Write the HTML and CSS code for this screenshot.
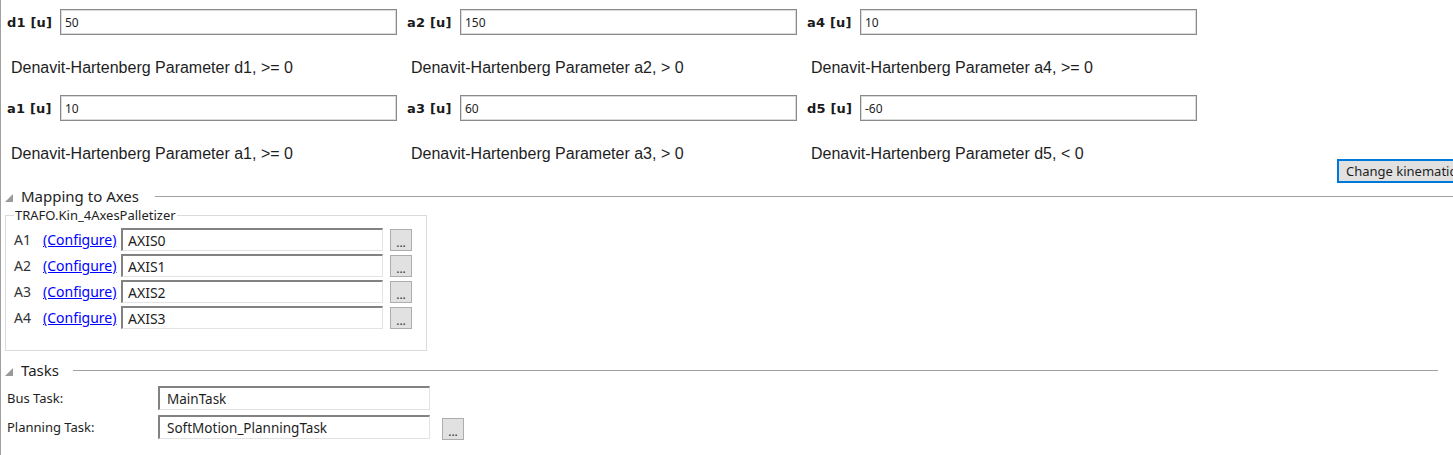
FILE: index.html
```html
<!DOCTYPE html>
<html>
<head>
<meta charset="utf-8">
<link rel="stylesheet" href="styles.css">
</head>
<body>
<div class="params">
  <div class="param">
    <div class="field"><span class="field-label">d1 [u]</span><input class="dh-input" value="50"></div>
    <div class="desc">Denavit-Hartenberg Parameter d1, &gt;= 0</div>
  </div>
  <div class="param">
    <div class="field"><span class="field-label">a2 [u]</span><input class="dh-input" value="150"></div>
    <div class="desc">Denavit-Hartenberg Parameter a2, &gt; 0</div>
  </div>
  <div class="param">
    <div class="field"><span class="field-label">a4 [u]</span><input class="dh-input" value="10"></div>
    <div class="desc">Denavit-Hartenberg Parameter a4, &gt;= 0</div>
  </div>
  <div class="param">
    <div class="field"><span class="field-label">a1 [u]</span><input class="dh-input" value="10"></div>
    <div class="desc">Denavit-Hartenberg Parameter a1, &gt;= 0</div>
  </div>
  <div class="param">
    <div class="field"><span class="field-label">a3 [u]</span><input class="dh-input" value="60"></div>
    <div class="desc">Denavit-Hartenberg Parameter a3, &gt; 0</div>
  </div>
  <div class="param">
    <div class="field"><span class="field-label">d5 [u]</span><input class="dh-input" value="-60"></div>
    <div class="desc">Denavit-Hartenberg Parameter d5, &lt; 0</div>
  </div>
</div>

<div class="actions">
  <button class="btn-primary">Change kinematics</button>
</div>

<div class="section-header">
  <svg class="caret" width="8" height="8" viewBox="0 0 8 8"><polygon points="8,0 8,8 0,8" fill="#9a9a9a"/></svg>
  <span class="section-title">Mapping to Axes</span>
  <span class="section-line"></span>
</div>

<fieldset class="group">
  <legend class="group-legend">TRAFO.Kin_4AxesPalletizer</legend>
  <div class="axis-rows">
    <div class="axis-row"><span class="axis-label">A1</span><a class="axis-link" href="#">(Configure)</a><input class="inset-input" value="AXIS0"><button class="dots">...</button></div>
    <div class="axis-row"><span class="axis-label">A2</span><a class="axis-link" href="#">(Configure)</a><input class="inset-input" value="AXIS1"><button class="dots">...</button></div>
    <div class="axis-row"><span class="axis-label">A3</span><a class="axis-link" href="#">(Configure)</a><input class="inset-input" value="AXIS2"><button class="dots">...</button></div>
    <div class="axis-row"><span class="axis-label">A4</span><a class="axis-link" href="#">(Configure)</a><input class="inset-input" value="AXIS3"><button class="dots">...</button></div>
  </div>
</fieldset>

<div class="section-header tasks-header">
  <svg class="caret" width="8" height="8" viewBox="0 0 8 8"><polygon points="8,0 8,8 0,8" fill="#9a9a9a"/></svg>
  <span class="section-title">Tasks</span>
  <span class="section-line tasks-line"></span>
</div>

<div class="task-rows">
  <div class="task-row"><span class="task-label">Bus Task:</span><input class="inset-input task-input" value="MainTask"></div>
  <div class="task-row"><span class="task-label">Planning Task:</span><input class="inset-input task-input" value="SoftMotion_PlanningTask"><button class="dots task-dots">...</button></div>
</div>
</body>
</html>
```

FILE: styles.css
```css
html, body {
  margin: 0;
  padding: 0;
}
body {
  width: 1453px;
  height: 455px;
  box-sizing: border-box;
  border-left: 1px solid #a0a0a0;
  overflow: hidden;
  background: #ffffff;
  font-family: "Noto Sans", "DejaVu Sans", sans-serif;
  color: #1e1e1e;
}

.params {
  display: grid;
  grid-template-columns: repeat(3, 400px);
  row-gap: 18px;
  padding-top: 9px;
}
.param {
  display: flex;
  flex-direction: column;
}
.field {
  display: flex;
  align-items: center;
  height: 26px;
}
.field-label {
  width: 59px;
  box-sizing: border-box;
  padding-left: 6px;
  font-family: "DejaVu Sans", sans-serif;
  font-weight: bold;
  font-size: 13px;
  color: #1a1a1a;
  letter-spacing: 0.2px;
}
.dh-input {
  width: 337px;
  height: 26px;
  box-sizing: border-box;
  margin: 0;
  border: 1px solid #8a8a8a;
  box-shadow: inset 0 0 0 1px #dadada;
  padding: 0 0 0 4px;
  font-family: "Noto Sans", sans-serif;
  font-size: 12px;
  color: #1e1e1e;
  background: #fff;
  outline: none;
}
.desc {
  margin-top: 24px;
  height: 18px;
  line-height: 18px;
  padding-left: 10px;
  font-family: "Liberation Sans", Arial, sans-serif;
  font-size: 16px;
  color: #1e1e1e;
}

.actions {
  display: flex;
  margin-top: -4px;
  padding-left: 1336px;
  height: 24px;
}
.btn-primary {
  flex: none;
  height: 24px;
  box-sizing: border-box;
  margin: 0;
  padding: 0 7px;
  border: 2px solid #0078d7;
  background: #e1e1e1;
  font-family: "Noto Sans", sans-serif;
  font-size: 13px;
  line-height: 18px;
  color: #1e1e1e;
  white-space: nowrap;
}

.section-header {
  display: flex;
  align-items: center;
  height: 20px;
  margin-top: 3px;
}
.caret {
  flex: none;
  margin-left: 4px;
  margin-top: 4px;
}
.section-title {
  margin-left: 8px;
  font-size: 15px;
  line-height: 20px;
  color: #1e1e1e;
}
.section-line {
  flex: 1;
  height: 1px;
  background: #a0a0a0;
  margin-left: 16px;
}
.tasks-header {
  margin-top: 9px;
}
.tasks-line {
  margin-left: 14px;
  margin-right: 15px;
}

.group {
  width: 422px;
  box-sizing: border-box;
  margin: 1px 0 0 4px;
  padding: 0 0 21px 8px;
  border: 1px solid #dadada;
}
.group-legend {
  margin-left: 0;
  padding: 0 1px;
  font-size: 13px;
  line-height: 17px;
  color: #1e1e1e;
}
.axis-rows {
  display: flex;
  flex-direction: column;
  gap: 3px;
  padding-top: 4px;
}
.axis-row {
  display: flex;
  align-items: center;
  height: 23px;
}
.axis-label {
  width: 29px;
  font-size: 14px;
  color: #333;
}
.axis-link {
  width: 78px;
  font-size: 14px;
  color: #0000ff;
  text-decoration: underline;
}
.inset-input {
  width: 262px;
  height: 23px;
  box-sizing: border-box;
  margin: 0;
  padding: 0 0 0 5px;
  border-top: 2px solid #828282;
  border-left: 2px solid #828282;
  border-right: 1px solid #e3e3e3;
  border-bottom: 1px solid #e3e3e3;
  font-family: "Noto Sans", sans-serif;
  font-size: 14px;
  color: #1e1e1e;
  background: #fff;
  outline: none;
}
.dots {
  flex: none;
  width: 22px;
  height: 22px;
  box-sizing: border-box;
  margin: 1px 0 0 7px;
  padding: 6px 0 0 0;
  border: 1px solid #adadad;
  background: #e1e1e1;
  font-family: "Noto Sans", sans-serif;
  font-size: 12px;
  line-height: 12px;
  color: #333;
}

.task-rows {
  display: flex;
  flex-direction: column;
  gap: 5px;
  margin-top: 6px;
}
.task-row {
  display: flex;
  align-items: flex-start;
  height: 24px;
}
.task-label {
  width: 157px;
  box-sizing: border-box;
  padding-left: 6px;
  font-size: 13px;
  line-height: 24px;
  color: #1e1e1e;
}
.task-input {
  width: 272px;
  height: 24px;
  font-size: 13.5px;
  padding-left: 7px;
}
.task-dots {
  margin: 3px 0 0 12px;
}
```
